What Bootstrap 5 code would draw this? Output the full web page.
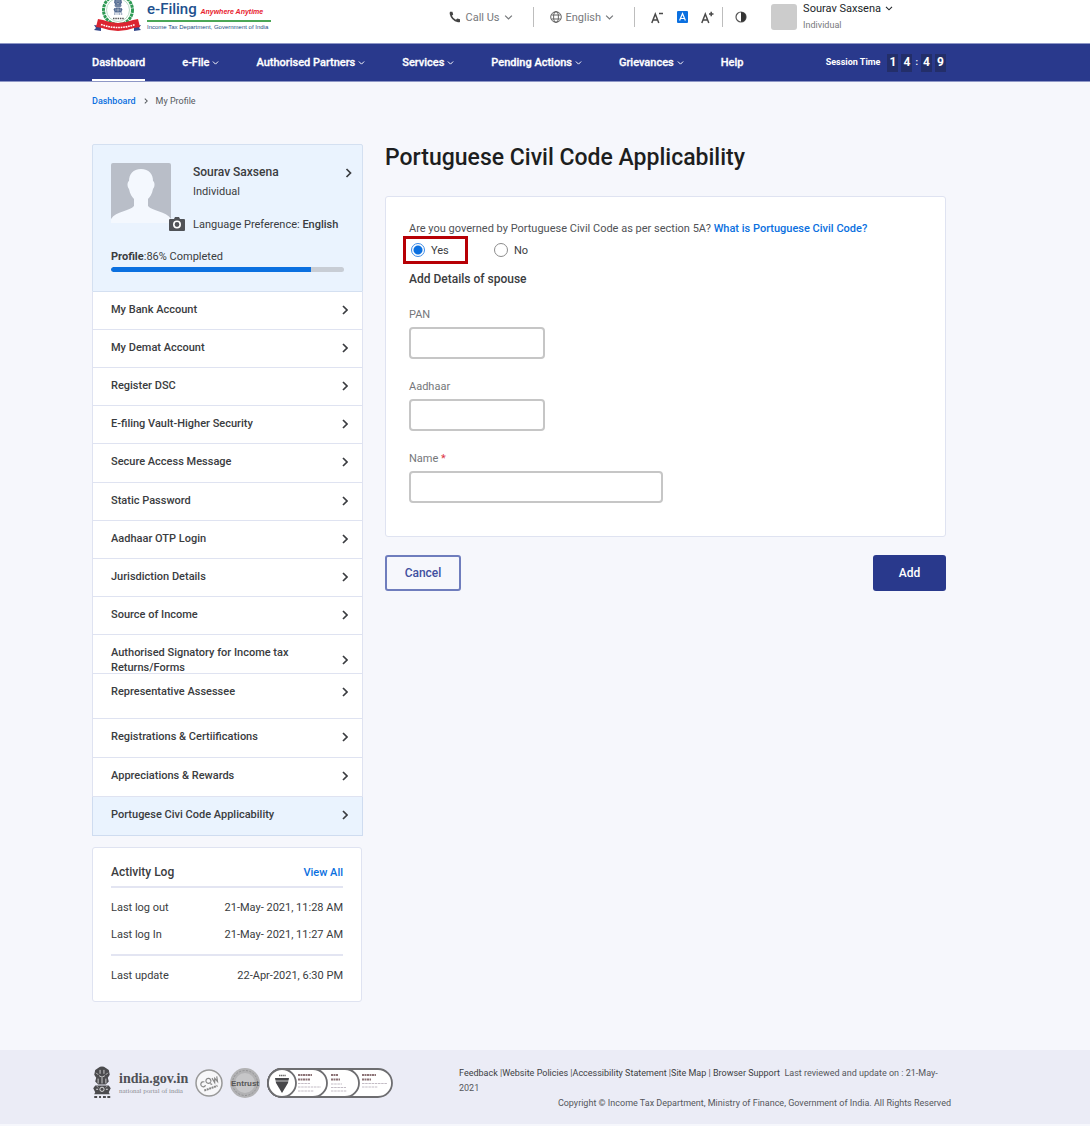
<!DOCTYPE html>
<html lang="en">
<head>
<meta charset="utf-8">
<meta name="viewport" content="width=device-width, initial-scale=1">
<title>My Profile - e-Filing</title>
<link href="https://cdn.jsdelivr.net/npm/bootstrap@5.3.0/dist/css/bootstrap.min.css" rel="stylesheet">
<style>
:root{--navy:#29398c;--blue:#0b70e0;--line:#dfe3f1;--ink:#3a3c40}
body{font-family:Roboto,"Liberation Sans",sans-serif;font-size:11px;line-height:15px;color:var(--ink);background:#f6f7fc}
a{color:var(--blue);text-decoration:none}
svg{display:block;flex:none}
.wrap{padding-left:92px;padding-right:144px}
.fw-medium{font-weight:500}
.who{font-size:12px}
.topbar{height:43px;background:#fff}
.brand-text{margin:1px 0 0 4px;width:124px}
.brand-name{font-size:15px;line-height:17px;color:#21508e;font-weight:500}
.brand-tag{font-size:7px;font-style:italic;color:#e8202c;font-weight:700;font-family:"Liberation Sans",sans-serif}
.brand-dept{border-top:2px solid #4ba757;font:500 6px/10px "Liberation Sans",sans-serif;color:#1d4d85;white-space:nowrap}
.tools{height:34px;color:#77797c;margin-right:53px}
.tools button{border:0;background:none;padding:0;color:inherit;line-height:15px}
.tools .size-btn{margin-left:13px}
.tools .after{margin-left:20px}
.vline{width:1px;height:20px;background:#bdbdbd}
.avatar-sm{width:26px;height:26px;border-radius:3px;background:#ccc}
.user-name{margin-left:6px}
.small-role{font-size:9px;line-height:18px}
.mainnav{background:var(--navy);height:39px;border-top:1px solid #8e97c6;border-bottom:1px solid #8e97c6}
.mainnav .nav{gap:37px;height:37px}
.mainnav .nav-link{padding:2px 0 0;height:37px;color:#fff;font-weight:500;-webkit-text-stroke:.3px;display:flex;align-items:center;gap:3px;border-bottom:2px solid transparent}
.mainnav .nav-link.active{border-bottom-color:#fff}
.session{font-size:9px;font-weight:700;color:#fff;gap:3px}
.digit{background:#232e69;width:11px;height:18px;line-height:17px;font-size:12px;text-align:center}
.crumbs{font-size:9px;height:38px;color:#55585c}
.sidebar{width:271px;flex:none}
.panel{background:#fff;border:1px solid var(--line);border-radius:3px}
.profile{background:#eaf3fe;border:1px solid #d4e0f1;height:148px;padding:18px 10px 0 18px;border-radius:2px 2px 0 0}
.photo{width:82px}
.photo .cam{position:absolute;left:58px;top:54px}
.name-row{padding-top:2px}
.lang{margin-top:18px}
.done{margin-top:17px}
.p-bar{height:5px;background:#c8cdd5;border-radius:3px;margin:3px 8px 0 0}
.p-bar .progress-bar{background:var(--blue);border-radius:3px 0 0 3px}
.side-item{height:38px;padding:10px 14px 0 18px;background:#fff;border:0 solid var(--line);border-width:0 1px 1px;color:var(--ink);font-weight:500;display:block}
.side-item:nth-child(5n),.side-item:nth-child(n+12){height:39px}
.side-item.tall{height:45px}
.side-item.on{background:#eaf3fe;border-color:#cfdcf0}
.side-item .lbl{width:200px}
.log{padding:17px 18px 0;height:155px;margin-top:11px;width:270px}
.log-head{padding-bottom:6px}
.log hr{margin:0;border-top:2px solid #e3e5f2;opacity:1}
.main-col{margin-left:22px}
.title{font-size:23px;line-height:28px;font-weight:500;color:#1d1e20;margin:0}
.formcard{padding:24px 24px 0 23px;height:341px}
.question{color:#505256}
.pick{height:28px;border:3px solid transparent;padding:0 5px;gap:6px}
.pick.marked{border-color:#b70005;width:65px;margin-left:-6px;margin-right:18px}
.pick .form-check-input{width:14px;height:14px;margin:0;border:1px solid #8c8c8c;box-shadow:none}
.pick .form-check-input:checked{background:#fff radial-gradient(circle,var(--blue) 0 4px,#fff 5px);border-color:#3d8ce8}
.spouse{font-size:12px}
.fieldset-row{margin-top:20px}
.fieldset-row label{display:block;color:#75777a;line-height:15px;margin-bottom:5px}
.fieldset-row .form-control{height:32px;width:136px;border:2px solid #c6c6c6;border-radius:4px;padding:4px 8px;font-size:12px}
.fieldset-row .wide{width:254px}
.actions{margin-top:18px}
.btn{font-size:12px;font-weight:500;height:36px;border-radius:3px;padding:0 10px}
.btn-cancel{width:76px;border:2px solid #6f7dbd;color:#4150a0}
.btn-add{width:73px;background:var(--navy);color:#fff}
.foot{background:#ebecf6;height:74px;margin-top:48px}
.foot-text{font-size:9px;width:492px;margin-right:-5px;color:#55575b}
.foot-text a{color:#3c3e42}
.gov{font:700 14px/16px "Liberation Serif",serif;color:#505156}
.gov-sub{font:7px/8px "Liberation Serif",serif;color:#8b8c93}
.seals{gap:7px}
</style>
</head>
<body>
<svg width="0" height="0" class="position-absolute">
  <defs>
    <symbol id="down" viewBox="0 0 8 6"><path d="M1 1.3 4 4.3 7 1.3" fill="none" stroke="currentColor" stroke-width="1.1"/></symbol>
    <symbol id="right" viewBox="0 0 6 10"><path d="M1 1 5 5 1 9" fill="none" stroke="currentColor" stroke-width="1.7"/></symbol>
    <symbol id="lions" viewBox="0 0 20 34"><path d="M6 2Q10-1 14 2l3 2 1 5-2 3 1 4-3 3H6l-3-3 1-4-2-3 1-5z" fill="currentColor"/><path d="M8 4v4M12 4v4M7 10q3 3 6 0M6 13v5M10 12v6M14 13v5M4 7l2 2M16 7l-2 2" stroke="#ddd" stroke-width=".9" fill="none"/><path d="M3 20h14l2 3-2 4 1 2H2l1-2-2-4z" fill="currentColor"/><circle cx="10" cy="24" r="2.2" fill="none" stroke="#ddd"/><path d="M4 24h2M14 24h2M5 21l1 1M15 21l-1 1" stroke="#ddd"/><path d="M2 32h3M7 32h2M11 32h3M15.500 32h3" stroke="currentColor" stroke-width="2"/></symbol>
  </defs>
</svg>

<header class="topbar wrap d-flex justify-content-between align-items-start">
  <a href="#" class="d-flex align-items-start" aria-label="e-Filing home">
    <svg width="51" height="33" viewBox="0 0 51 33">
      <circle cx="26" cy="10" r="14.500" fill="#fff" stroke="#2f9a55" stroke-width="3" stroke-dasharray="3 .7"/>
      <circle cx="26" cy="10" r="11.500" fill="none" stroke="#9bcbae" stroke-width=".7"/>
      <svg x="21" y="-3" width="10" height="19" color="#536b92"><use href="#lions" width="10" height="19"/></svg>
      <path d="M21 18.500h11" stroke="#555" stroke-width="1.600" stroke-dasharray="1.500 .8"/>
      <path d="M2 25l7 1v5l-7-1 2-2zM49 25l-7 1v5l7-1-2-2z" fill="#34478a"/>
      <path d="M6 19l5 1q15 6 30 0l5-1 2 8-6 1q-16 6-32 0l-6-1z" fill="#dc2430"/>
      <path d="M9 24.500q17 6 34 0" fill="none" stroke="#fff" stroke-width="1.600" stroke-dasharray="1.700 .8"/>
    </svg>
    <div class="brand-text">
      <div class="brand-name">e-Filing <span class="brand-tag">Anywhere Anytime</span></div>
      <div class="brand-dept">Income Tax Department, Government of India</div>
    </div>
  </a>
  <div class="tools d-flex align-items-center">
    <button type="button" class="d-flex align-items-center">
      <svg width="12" height="12" viewBox="0 0 12 12" class="me-1"><path d="M1 .7h2.400l.8 2.800-1.300 1.300q1.200 2.600 4 4l1.400-1.300 2.700.8V11q-1 .5-2 .2Q2.200 9.800.7 3 .6 1.500 1 .7z" fill="#444"/></svg>
      Call Us <svg width="9" height="7" class="ms-1"><use href="#down"/></svg>
    </button>
    <span class="vline after me-3"></span>
    <button type="button" class="d-flex align-items-center">
      <svg width="12" height="12" viewBox="0 0 12 12" class="me-1" fill="none" stroke="#555" stroke-width=".9"><circle cx="6" cy="6" r="5.300"/><ellipse cx="6" cy="6" rx="2.400" ry="5.300"/><path d="M1.500 4h9M1.500 8h9"/></svg>
      English <svg width="9" height="7" class="ms-1"><use href="#down"/></svg>
    </button>
    <span class="vline after me-3"></span>
    <button type="button" aria-label="Smaller text"><svg width="13" height="13" viewBox="0 0 13 13" fill="none" stroke="#4a4a4a" stroke-width="1.500"><path d="M.8 12 4.300 3l3.500 9M2 9h4.600M8 2.500h4"/></svg></button>
    <button type="button" class="size-btn" aria-label="Normal text"><svg width="11" height="12" viewBox="0 0 11 12"><rect width="11" height="12" rx="1" fill="#0b70e0"/><path d="M2.600 9.500 5.500 2.500l2.900 7M3.500 7.500h4" fill="none" stroke="#fff" stroke-width="1.200"/></svg></button>
    <button type="button" class="size-btn" aria-label="Larger text"><svg width="13" height="13" viewBox="0 0 13 13" fill="none" stroke="#4a4a4a" stroke-width="1.500"><path d="M.8 12 4.300 3l3.500 9M2 9h4.600M8 3h4.500M10.200.8v4.500"/></svg></button>
    <span class="vline ms-2 me-2"></span>
    <button type="button" class="ms-1" aria-label="Contrast"><svg width="12" height="12" viewBox="0 0 12 12"><circle cx="6" cy="6" r="5" fill="none" stroke="#555" stroke-width="1.200"/><path d="M6 1a5 5 0 0 1 0 10z" fill="#333"/></svg></button>
    <span class="avatar-sm ms-4"></span>
    <div class="user-name">
      <button type="button" class="d-flex align-items-center text-dark">Sourav Saxsena <svg width="8" height="7" class="ms-1"><use href="#down"/></svg></button>
      <div class="small-role">Individual</div>
    </div>
  </div>
</header>

<nav class="mainnav wrap d-flex align-items-center justify-content-between">
  <div class="nav flex-nowrap">
    <a class="nav-link active" href="#">Dashboard</a>
    <a class="nav-link" href="#">e-File <svg width="7" height="6"><use href="#down"/></svg></a>
    <a class="nav-link" href="#">Authorised Partners <svg width="7" height="6"><use href="#down"/></svg></a>
    <a class="nav-link" href="#">Services <svg width="7" height="6"><use href="#down"/></svg></a>
    <a class="nav-link" href="#">Pending Actions <svg width="7" height="6"><use href="#down"/></svg></a>
    <a class="nav-link" href="#">Grievances <svg width="7" height="6"><use href="#down"/></svg></a>
    <a class="nav-link" href="#">Help</a>
  </div>
  <div class="session d-flex align-items-center"><span class="me-1">Session Time</span><span class="digit">1</span><span class="digit">4</span><span>:</span><span class="digit">4</span><span class="digit">9</span></div>
</nav>

<div class="wrap">
  <nav class="crumbs d-flex align-items-center" aria-label="Breadcrumb"><a href="#" class="fw-medium">Dashboard</a><svg width="4" height="6" class="ms-2 me-2"><use href="#right"/></svg><span>My Profile</span></nav>
  <div class="d-flex pt-4 align-items-start">
    <aside class="sidebar">
      <section class="profile">
        <div class="d-flex">
          <div class="photo position-relative">
            <svg width="60" height="60" viewBox="0 0 60 60"><rect width="60" height="60" rx="2" fill="#b9bec8"/><path d="M30 6c8 0 12 5 12 12 2 1 2 6 0 8-1 5-3 8-5 10v7c4 5 18 5 23 13v4H0v-4c5-8 19-8 23-13v-7c-2-2-4-5-5-10-2-2-2-7 0-8 0-7 4-12 12-12z" fill="#f4f8fe"/></svg>
            <svg class="cam" width="16" height="14" viewBox="0 0 16 14"><path d="M1 2h4l1-2h4l1 2h4q1 0 1 1v10q0 1-1 1H1q-1 0-1-1V3q0-1 1-1z" fill="#505257"/><circle cx="8" cy="7.500" r="3.200" fill="#505257" stroke="#fff" stroke-width="1.600"/></svg>
          </div>
          <div class="flex-grow-1">
            <div class="name-row d-flex justify-content-between align-items-center"><span class="fw-medium who">Sourav Saxsena</span><svg width="7" height="10"><use href="#right"/></svg></div>
            <div class="pt-1">Individual</div>
            <div class="lang">Language Preference: <b class="fw-medium">English</b></div>
          </div>
        </div>
        <div class="done"><b>Profile</b>:86% Completed</div>
        <div class="progress p-bar" role="progressbar" aria-label="Profile completion" aria-valuenow="86" aria-valuemin="0" aria-valuemax="100"><div class="progress-bar" style="width:86%"></div></div>
      </section>
      <div class="side-list">
        <a class="side-item" href="#"><div class="d-flex justify-content-between align-items-center"><span class="lbl">My Bank Account</span><svg width="6" height="10"><use href="#right"/></svg></div></a>
        <a class="side-item" href="#"><div class="d-flex justify-content-between align-items-center"><span class="lbl">My Demat Account</span><svg width="6" height="10"><use href="#right"/></svg></div></a>
        <a class="side-item" href="#"><div class="d-flex justify-content-between align-items-center"><span class="lbl">Register DSC</span><svg width="6" height="10"><use href="#right"/></svg></div></a>
        <a class="side-item" href="#"><div class="d-flex justify-content-between align-items-center"><span class="lbl">E-filing Vault-Higher Security</span><svg width="6" height="10"><use href="#right"/></svg></div></a>
        <a class="side-item" href="#"><div class="d-flex justify-content-between align-items-center"><span class="lbl">Secure Access Message</span><svg width="6" height="10"><use href="#right"/></svg></div></a>
        <a class="side-item" href="#"><div class="d-flex justify-content-between align-items-center"><span class="lbl">Static Password</span><svg width="6" height="10"><use href="#right"/></svg></div></a>
        <a class="side-item" href="#"><div class="d-flex justify-content-between align-items-center"><span class="lbl">Aadhaar OTP Login</span><svg width="6" height="10"><use href="#right"/></svg></div></a>
        <a class="side-item" href="#"><div class="d-flex justify-content-between align-items-center"><span class="lbl">Jurisdiction Details</span><svg width="6" height="10"><use href="#right"/></svg></div></a>
        <a class="side-item" href="#"><div class="d-flex justify-content-between align-items-center"><span class="lbl">Source of Income</span><svg width="6" height="10"><use href="#right"/></svg></div></a>
        <a class="side-item" href="#"><div class="d-flex justify-content-between align-items-center"><span class="lbl">Authorised Signatory for Income tax Returns/Forms</span><svg width="6" height="10"><use href="#right"/></svg></div></a>
        <a class="side-item tall" href="#"><div class="d-flex justify-content-between align-items-center"><span class="lbl">Representative Assessee</span><svg width="6" height="10"><use href="#right"/></svg></div></a>
        <a class="side-item" href="#"><div class="d-flex justify-content-between align-items-center"><span class="lbl">Registrations &amp; Certiifications</span><svg width="6" height="10"><use href="#right"/></svg></div></a>
        <a class="side-item" href="#"><div class="d-flex justify-content-between align-items-center"><span class="lbl">Appreciations &amp; Rewards</span><svg width="6" height="10"><use href="#right"/></svg></div></a>
        <a class="side-item on" href="#"><div class="d-flex justify-content-between align-items-center"><span class="lbl">Portugese Civi Code Applicability</span><svg width="6" height="10"><use href="#right"/></svg></div></a>
      </div>
      <section class="panel log">
        <div class="log-head d-flex justify-content-between"><span class="fw-medium who">Activity Log</span><a href="#" class="fw-medium">View All</a></div>
        <hr>
        <div class="d-flex justify-content-between mt-2 pt-1"><span>Last log out</span><span>21-May- 2021, 11:28 AM</span></div>
        <div class="d-flex justify-content-between mt-2 pt-1 pb-2 mb-1"><span>Last log In</span><span>21-May- 2021, 11:27 AM</span></div>
        <hr>
        <div class="d-flex justify-content-between mt-2 pt-1"><span>Last update</span><span>22-Apr-2021, 6:30 PM</span></div>
      </section>
    </aside>

    <main class="main-col flex-grow-1">
      <h1 class="title">Portuguese Civil Code Applicability</h1>
      <form>
        <div class="panel formcard mt-4">
          <div class="question">Are you governed by Portuguese Civil Code as per section 5A? <a href="#" class="fw-medium">What is Portuguese Civil Code?</a></div>
          <div class="d-flex">
            <div class="pick marked d-flex align-items-center"><input class="form-check-input" type="radio" name="gov" id="yes" checked><label for="yes">Yes</label></div>
            <div class="pick d-flex align-items-center"><input class="form-check-input" type="radio" name="gov" id="no"><label for="no">No</label></div>
          </div>
          <div class="fw-medium pt-2 spouse">Add Details of spouse</div>
          <div class="fieldset-row"><label for="pan">PAN</label><input id="pan" type="text" class="form-control"></div>
          <div class="fieldset-row"><label for="aad">Aadhaar</label><input id="aad" type="text" class="form-control"></div>
          <div class="fieldset-row"><label for="nam">Name <span class="text-danger">*</span></label><input id="nam" type="text" class="form-control wide" required></div>
        </div>
        <div class="actions d-flex justify-content-between"><button type="button" class="btn btn-cancel">Cancel</button><button type="submit" class="btn btn-add">Add</button></div>
      </form>
    </main>
  </div>
</div>

<footer class="foot wrap d-flex justify-content-between align-items-start pt-3">
  <div class="seals d-flex align-items-center">
    <svg width="20" height="33" color="#4b4b4e"><use href="#lions"/></svg>
    <div><div class="gov">india.gov.in</div><div class="gov-sub">national portal of india</div></div>
    <svg width="28" height="28" viewBox="0 0 28 28"><circle cx="14" cy="14" r="13" fill="#f7f7f9" stroke="#999" stroke-width="1.500"/><g transform="rotate(-20 14 14)" fill="none" stroke="#888" stroke-width="1.200"><path d="M10 11.500A2.500 2.500 0 1 0 10 15M16 13.500a2.500 2.500 0 1 0-.1.100M15 15l1.500 1.500M18.500 10.500l1 5 1.500-4 1.500 4 1-5"/><path d="M7 19.500h14" stroke-width="2" stroke-dasharray="2 .6"/></g></svg>
    <svg width="30" height="30" viewBox="0 0 30 30"><circle cx="15" cy="15" r="15" fill="#b2b2b4"/><circle cx="15" cy="15" r="12.500" fill="none" stroke="#929294" stroke-dasharray="2 1.500"/><circle cx="15" cy="15" r="10" fill="#c6c6c8"/><text x="15" y="18" text-anchor="middle" font-family="Liberation Sans" font-weight="700" font-size="8" fill="#555">Entrust</text></svg>
    <svg width="126" height="30" viewBox="0 0 126 30" fill="#fff" stroke="#6d6d70" stroke-width="1.800"><rect x="1" y="1" width="124" height="28" rx="14"/><rect x="1" y="1" width="91" height="28" rx="14"/><rect x="1" y="1" width="59" height="28" rx="14"/><circle cx="15" cy="15" r="14"/><g stroke="none"><path d="M8 10h14l-1 5-6 10-6-10z" fill="#47474a"/></g><path d="M8 13h14" stroke="#fff" stroke-width=".7"/><path d="M12 7.500h7" stroke="#666" stroke-width="1.500" stroke-dasharray="1.300 .5"/><g stroke="#8c7376" stroke-width="2" stroke-dasharray="2 .5"><path d="M31 7h14M31 11.500h12M64 7h7M64 11.500h9M95 7h14M95 11.500h9"/></g><g stroke="#c3bcc5" stroke-width="1" stroke-dasharray="2.500 .7"><path d="M31 15.500h12M31 19h23M31 23h16M64 16h11M64 19.500h15M64 23h16M95 15.500h25M95 19h16"/></g></svg>
  </div>
  <div class="foot-text">
    <div><a href="#">Feedback</a> <span>|</span><a href="#">Website Policies</a> <span>|</span><a href="#">Accessibility Statement</a> <span>|</span><a href="#">Site Map</a> <span>|</span> <a href="#">Browser Support</a>&nbsp; <span>Last reviewed and update on : 21-May-</span><wbr><span>2021</span></div>
    <div class="text-end">Copyright <b>©</b> Income Tax Department, Ministry of Finance, Government of India. All Rights Reserved</div>
  </div>
</footer>
<script src="https://cdn.jsdelivr.net/npm/bootstrap@5.3.0/dist/js/bootstrap.bundle.min.js"></script>
</body>
</html>
